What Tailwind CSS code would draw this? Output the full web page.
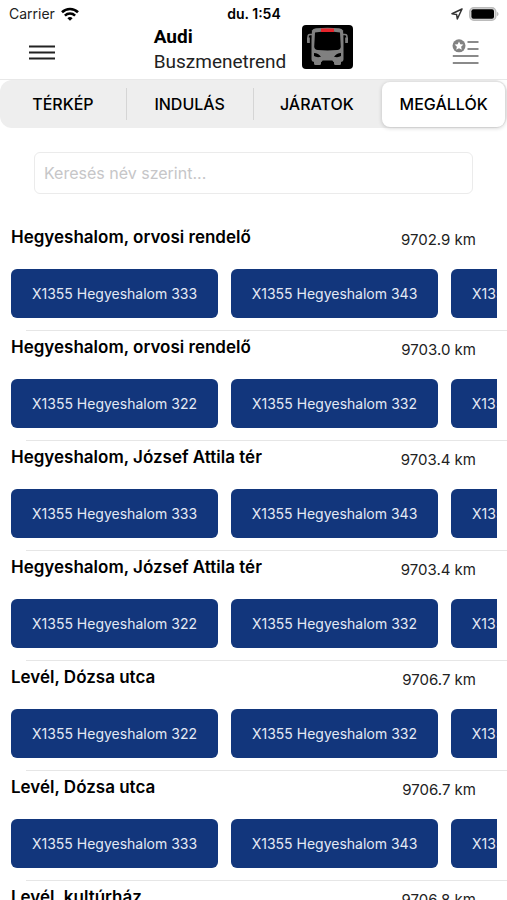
<!DOCTYPE html>
<html lang="hu">
<head>
<meta charset="utf-8">
<meta name="viewport" content="width=device-width, initial-scale=1">
<title>Audi Buszmenetrend</title>
<script src="https://cdn.jsdelivr.net/npm/@tailwindcss/browser@4"></script>
</head>
<body class="flex h-screen flex-col overflow-hidden bg-white font-['Inter','Liberation_Sans',sans-serif] text-black">
<header class="flex h-20 shrink-0 flex-col border-b border-[#e8e8e8]">
  <div class="grid h-6 shrink-0 grid-cols-3 items-center pt-1 pr-2 pl-[9px] text-sm leading-5">
    <div class="flex items-center gap-[6px] text-[#222]">
      <span>Carrier</span>
      <svg class="h-[14px] w-[18px]" viewBox="0 0 18 14" fill="none" stroke="#000" stroke-width="2.6"><path d="M1 5.2a11.6 11.6 0 0 1 16 0M3.9 8.600a7.4 7.400 0 0 1 10.2 0"/><path d="M9 13.8 6.400 11.200a4 4 0 0 1 5.200 0Z" fill="#000" stroke="none"/></svg>
    </div>
    <div class="text-center font-semibold">du. 1:54</div>
    <div class="flex items-center justify-end gap-[6px]">
      <svg class="h-3 w-3" viewBox="0 0 12 12" fill="none" stroke="#333" stroke-width="1.5" stroke-linejoin="round"><path d="M11 1 1 5.800l4.600.6.7 4.600Z"/></svg>
      <svg class="h-[14px] w-[30px]" viewBox="0 0 30 14"><rect x=".8" y=".8" width="26" height="12.400" rx="4" fill="#ddd" stroke="#bbb" stroke-width="1.500"/><rect x="2.400" y="2.200" width="22.600" height="9.600" rx="2" fill="#000"/><path d="M28 4.800q1.600.8 1.600 2.200T28 9.200Z" fill="#bbb"/></svg>
    </div>
  </div>
  <div class="grid flex-1 grid-cols-[1fr_auto_1fr] items-start px-7">
    <button class="mt-[21px] h-[15px] w-7 justify-self-start" aria-label="Menü">
      <svg class="h-[15px] w-7" viewBox="0 0 28 15" stroke="#222" stroke-width="1.8"><path d="M1 1.500h26M1 7.500h26M1 13.500h26"/></svg>
    </button>
    <div class="flex items-start gap-4">
      <h1 class="font-['Roboto',sans-serif] text-[19px] leading-[25px]"><span class="block font-bold">Audi</span><span class="block text-[#222]">Buszmenetrend</span></h1>
      <svg class="mt-px h-11 w-[51px]" viewBox="0 0 51 44"><rect width="51" height="44" rx="4" fill="#000"/><path d="M10 5.500Q11 3.500 14 3.200Q25.500 2.200 37 3.200q3 .3 4 2.300Q41.500 10 41.500 16V34q0 3-3 3h-26q-3 0-3-3V16Q9.500 10 10 5.500Z" fill="#808080"/><path d="M13 7.500Q25.500 5.500 38 7.500L38.800 22q-.6 2.800-3.600 3-9.700.8-19.400 0-3-.2-3.600-3Z" fill="#000"/><rect x="19" y="3.500" width="13" height="3.500" fill="#e6242b"/><path d="M10.500 9.500H8Q6 9.500 6 12v6M40.500 9.500H43q2 0 2 2.500v6" fill="none" stroke="#808080" stroke-width="1.500"/><path d="M5 12.500h2.800V18H6.500Q5 18 5 16.500ZM43.200 12.500H46v4q0 1.500-1.500 1.500h-1.300Z" fill="#808080"/><path d="M12 28q4.500.2 7 3.800-4.500 1-7-.8ZM39 28q-4.500.2-7 3.800 4.500 1 7-.8ZM19.500 37l1.200-1.500h9.600L31.500 37Z" fill="#000"/><path d="M12 36h7v2.500q0 1.500-1.500 1.500h-4q-1.500 0-1.500-1.500ZM32 36h7v2.500q0 1.500-1.500 1.500h-4q-1.500 0-1.500-1.500Z" fill="#808080"/></svg>
    </div>
    <button class="mt-[15px] h-[26px] w-[27px] justify-self-end" aria-label="Kedvencek">
      <svg class="h-[26px] w-[27px]" viewBox="0 0 27 26"><circle cx="7" cy="6.800" r="6.500" fill="#828282"/><path d="m7 2.400 1.300 2.900 3.100.3-2.300 2.100.7 3.100L7 9.200l-2.800 1.600.7-3.100-2.300-2.100 3.100-.3Z" fill="#fff"/><path d="M15.500 3h11M15.500 10h11M.8 17h25.700M.8 24h25.700" stroke="#8a8a8a" stroke-width="2"/></svg>
    </button>
  </div>
</header>
<nav class="grid h-12 shrink-0 grid-cols-4 items-center rounded-xl bg-[#eee] text-base leading-5 font-medium">
  <button class="h-8 border-r border-[#d5d5d5]">TÉRKÉP</button>
  <button class="h-8 border-r border-[#d5d5d5]">INDULÁS</button>
  <button class="h-8">JÁRATOK</button>
  <button class="mr-[2px] ml-[2px] h-[45px] rounded-lg bg-white shadow-[0_1px_4px_rgba(0,0,0,0.2)]" aria-current="page">MEGÁLLÓK</button>
</nav>
<div class="shrink-0 px-[34px] pt-6 pb-[27px]">
  <input type="search" aria-label="Keresés név szerint" placeholder="Keresés név szerint..." class="block h-[42px] w-full rounded-md border border-[#ebebeb] bg-white px-[9px] text-base placeholder:text-[#c6c6c8] focus:outline-none">
</div>
<main class="min-h-0 flex-1 overflow-y-auto [scrollbar-width:none]"><ul id="stops"></ul></main>
<template id="stop">
  <li class="flex h-[110px] flex-col">
    <div class="flex items-start justify-between pr-[31px] pl-[11px]">
      <h2 class="pt-1 text-[17px] leading-6 font-semibold"></h2>
      <span class="pt-[7px] text-[15px] leading-6 text-[#222]"></span>
    </div>
    <div class="mt-[17px] mr-[10px] ml-[11px] flex gap-[13px] overflow-x-auto [scrollbar-width:none]"></div>
    <div class="mt-auto ml-[26px] border-b border-[#e6e6e6]"></div>
  </li>
</template>
<template id="route"><button class="h-[49px] w-[207px] shrink-0 rounded-md bg-[#12367c] text-sm leading-5 text-[#e4eaf5]"></button></template>
<script>
const stops = [
  ['Hegyeshalom, orvosi rendelő', '9702.9', [333, 343, 353]],
  ['Hegyeshalom, orvosi rendelő', '9703.0', [322, 332, 342]],
  ['Hegyeshalom, József Attila tér', '9703.4', [333, 343, 353]],
  ['Hegyeshalom, József Attila tér', '9703.4', [322, 332, 342]],
  ['Levél, Dózsa utca', '9706.7', [322, 332, 342]],
  ['Levél, Dózsa utca', '9706.7', [333, 343, 353]],
  ['Levél, kultúrház', '9706.8', [333, 343, 353]],
];
const list = document.getElementById('stops');
for (const [name, km, routes] of stops) {
  const li = document.getElementById('stop').content.firstElementChild.cloneNode(true);
  li.querySelector('h2').textContent = name;
  li.querySelector('span').textContent = km + ' km';
  for (const r of routes) {
    const b = document.getElementById('route').content.firstElementChild.cloneNode(true);
    b.textContent = 'X1355 Hegyeshalom ' + r;
    li.children[1].append(b);
  }
  list.append(li);
}
</script>
</body>
</html>
